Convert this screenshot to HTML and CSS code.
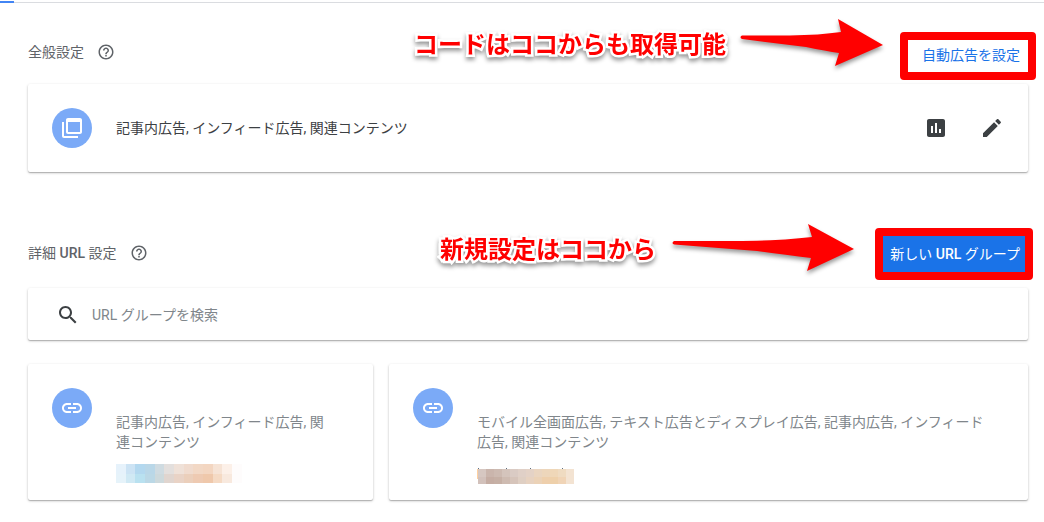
FILE: index.html
```
<!DOCTYPE html>
<html lang="ja">
<head>
    <meta charset="UTF-8">
    <meta name="viewport" content="width=device-width, initial-scale=1.0">
    <title>自動広告</title>
    <link rel="stylesheet" href="styles.css">
</head>
<body>
    <div class="tab-bar"><div class="tab-active"></div></div>

    <main class="content">
        <section class="section">
            <div class="section-head section-head-global">
                <h2 class="section-title">全般設定</h2>
                <button class="icon-button help" aria-label="ヘルプ">
                    <svg width="18" height="18" viewBox="0 0 24 24"><path d="M11 18h2v-2h-2v2zm1-16C6.480 2 2 6.480 2 12s4.480 10 10 10 10-4.480 10-10S17.520 2 12 2zm0 18c-4.410 0-8-3.590-8-8s3.590-8 8-8 8 3.590 8 8-3.590 8-8 8zm0-14c-2.210 0-4 1.790-4 4h2c0-1.100.9-2 2-2s2 .9 2 2c0 2-3 1.750-3 5h2c0-2.250 3-2.500 3-5 0-2.210-1.790-4-4-4z"/></svg>
                </button>
                <a class="setup-link" href="#">自動広告を設定</a>
                <div class="callout callout-code">
                    <span class="callout-text">コードはココからも取得可能</span>
                    <svg class="arrow" width="144" height="48" viewBox="0 0 144 48"><path d="M2 16.500 L50 16.500 Q80 16 101 13 L98 0 L143 26 L95 47 L99 34 Q86 32 66 28 L2 20 Q-1 18 2 16.500z"/></svg>
                </div>
                <div class="frame frame-code"></div>
            </div>

            <div class="card summary">
                <span class="avatar">
                    <svg width="24" height="24" viewBox="0 0 24 24"><path d="M4 6H2v14c0 1.100.9 2 2 2h14v-2H4V6zm16-4H8c-1.100 0-2 .9-2 2v12c0 1.100.9 2 2 2h12c1.100 0 2-.9 2-2V4c0-1.100-.9-2-2-2zm0 14H8V6h12v10z"/></svg>
                </span>
                <p class="summary-text">記事内広告, インフィード広告, 関連コンテンツ</p>
                <div class="actions">
                    <button class="icon-button" aria-label="レポート">
                        <svg width="24" height="24" viewBox="0 0 24 24"><path d="M19 3H5c-1.100 0-2 .9-2 2v14c0 1.100.9 2 2 2h14c1.100 0 2-.9 2-2V5c0-1.100-.9-2-2-2zM9 17H7v-7h2v7zm4 0h-2V7h2v10zm4 0h-2v-4h2v4z"/></svg>
                    </button>
                    <button class="icon-button" aria-label="編集">
                        <svg width="24" height="24" viewBox="0 0 24 24"><path d="M3 17.250V21h3.750L17.810 9.940l-3.750-3.750L3 17.250zM20.710 7.040c.39-.39.39-1.020 0-1.410l-2.340-2.340c-.39-.39-1.020-.39-1.410 0l-1.830 1.830 3.750 3.750 1.830-1.830z"/></svg>
                    </button>
                </div>
            </div>
        </section>

        <section class="section">
            <div class="section-head">
                <h2 class="section-title">詳細 <span class="latin">URL</span> 設定</h2>
                <button class="icon-button help" aria-label="ヘルプ">
                    <svg width="18" height="18" viewBox="0 0 24 24"><path d="M11 18h2v-2h-2v2zm1-16C6.480 2 2 6.480 2 12s4.480 10 10 10 10-4.480 10-10S17.520 2 12 2zm0 18c-4.410 0-8-3.590-8-8s3.590-8 8-8 8 3.590 8 8-3.590 8-8 8zm0-14c-2.210 0-4 1.790-4 4h2c0-1.100.9-2 2-2s2 .9 2 2c0 2-3 1.750-3 5h2c0-2.250 3-2.500 3-5 0-2.210-1.790-4-4-4z"/></svg>
                </button>
                <button class="new-group">新しい <span class="latin">URL</span> グループ</button>
                <div class="callout callout-new">
                    <span class="callout-text">新規設定はココから</span>
                    <svg class="arrow" width="183" height="48" viewBox="0 0 183 48"><path d="M2 17 L70 17 Q110 16.500 140 13 L136 0 L182 25 L135 47 L139 34 Q115 31 85 27 L2 20.500 Q-1 19 2 17z"/></svg>
                </div>
                <div class="frame frame-new"></div>
            </div>

            <label class="card search">
                <svg width="24" height="24" viewBox="0 0 24 24"><path d="M15.500 14h-.79l-.28-.27C15.410 12.590 16 11.110 16 9.500 16 5.910 13.090 3 9.500 3S3 5.910 3 9.500 5.910 16 9.500 16c1.610 0 3.090-.59 4.230-1.570l.27.28v.79l5 4.990L20.490 19l-4.990-5zm-6 0C7.010 14 5 11.990 5 9.500S7.010 5 9.500 5 14 7.010 14 9.500 11.990 14 9.500 14z"/></svg>
                <input class="search-input" type="text" placeholder="URL グループを検索" aria-label="URL グループを検索">
            </label>

            <div class="groups">
                <div class="card group">
                    <span class="avatar">
                        <svg width="24" height="24" viewBox="0 0 24 24"><path d="M3.900 12c0-1.710 1.390-3.100 3.100-3.100h4V7H7c-2.760 0-5 2.240-5 5s2.240 5 5 5h4v-1.900H7c-1.710 0-3.100-1.390-3.100-3.100zM8 13h8v-2H8v2zm9-6h-4v1.900h4c1.710 0 3.100 1.390 3.100 3.100s-1.390 3.100-3.100 3.100h-4V17h4c2.760 0 5-2.240 5-5s-2.240-5-5-5z"/></svg>
                    </span>
                    <div class="group-body">
                        <p class="group-text">記事内広告, インフィード広告, 関連コンテンツ</p>
                        <svg class="mosaic" width="126" height="20" viewBox="0 0 126 20" shape-rendering="crispEdges">
                            <path fill="#e6f2fb" d="M0 0h10v10H0z"/><path fill="#e6f3fa" d="M0 10h10v9H0z"/>
                            <path fill="#cce3f4" d="M10 0h9v10h-9z"/><path fill="#d0e9f4" d="M10 10h9v9h-9z"/>
                            <path fill="#b3d8ef" d="M19 0h10v10H19z"/><path fill="#b9e1f0" d="M19 10h10v9H19z"/>
                            <path fill="#b9d7e8" d="M29 0h10v10H29z"/><path fill="#bbd8e6" d="M29 10h10v9H29z"/>
                            <path fill="#cfdbe1" d="M39 0h9v10h-9z"/><path fill="#cdd9dc" d="M39 10h9v9h-9z"/>
                            <path fill="#e3dfdd" d="M48 0h10v10H48z"/><path fill="#e0d5cf" d="M48 10h10v9H48z"/>
                            <path fill="#efe1d8" d="M58 0h10v10H58z"/><path fill="#e9d3c6" d="M58 10h10v9H58z"/>
                            <path fill="#f0dbce" d="M68 0h9v10h-9z"/><path fill="#ebcfbb" d="M68 10h9v9h-9z"/>
                            <path fill="#f2d8c5" d="M77 0h10v10H77z"/><path fill="#eecab2" d="M77 10h10v9H77z"/>
                            <path fill="#f3d6c1" d="M87 0h10v10H87z"/><path fill="#efc8ab" d="M87 10h10v9H87z"/>
                            <path fill="#f6e3d5" d="M97 0h9v10h-9z"/><path fill="#f5dac4" d="M97 10h9v9h-9z"/>
                            <path fill="#fcf0e8" d="M106 0h10v10h-10z"/><path fill="#f8e9de" d="M106 10h10v9h-10z"/>
                            <path fill="#fefcfc" d="M116 0h10v19h-10z"/>
                        </svg>
                    </div>
                </div>

                <div class="card group">
                    <span class="avatar">
                        <svg width="24" height="24" viewBox="0 0 24 24"><path d="M3.900 12c0-1.710 1.390-3.100 3.100-3.100h4V7H7c-2.760 0-5 2.240-5 5s2.240 5 5 5h4v-1.900H7c-1.710 0-3.100-1.390-3.100-3.100zM8 13h8v-2H8v2zm9-6h-4v1.900h4c1.710 0 3.100 1.390 3.100 3.100s-1.390 3.100-3.100 3.100h-4V17h4c2.760 0 5-2.240 5-5s-2.240-5-5-5z"/></svg>
                    </span>
                    <div class="group-body">
                        <p class="group-text">モバイル全画面広告, テキスト広告とディスプレイ広告, 記事内広告, インフィード広告, 関連コンテンツ</p>
                        <svg class="mosaic" width="98" height="20" viewBox="0 0 98 20" shape-rendering="crispEdges">
                            <path fill="#ffd0a0" d="M0 5h1v10H0z"/>
                            <path fill="#607080" d="M1 4h1v1H1zM29 4h1v1h-1zM53 4h1v1h-1zM85 4h1v1h-1z"/>
                            <path fill="#d6c7c1" d="M1 5h8v8H1z"/><path fill="#d2c1bb" d="M1 13h8v7H1z"/>
                            <path fill="#cab5ac" d="M9 5h8v8H9z"/><path fill="#c5ada3" d="M9 13h8v7H9z"/>
                            <path fill="#cdbab1" d="M17 5h8v8h-8z"/><path fill="#c6b0a5" d="M17 13h8v7h-8z"/>
                            <path fill="#d4c4bc" d="M25 5h8v8h-8z"/><path fill="#cebbb1" d="M25 13h8v7h-8z"/>
                            <path fill="#dacbc4" d="M33 5h8v8h-8z"/><path fill="#d6c4ba" d="M33 13h8v7h-8z"/>
                            <path fill="#e0d0c7" d="M41 5h8v8h-8z"/><path fill="#dfcfc3" d="M41 13h8v7h-8z"/>
                            <path fill="#e4d2c6" d="M49 5h8v8h-8z"/><path fill="#e7d2c0" d="M49 13h8v7h-8z"/>
                            <path fill="#ead5c0" d="M57 5h8v8h-8z"/><path fill="#ebd2b7" d="M57 13h8v7h-8z"/>
                            <path fill="#edd6bb" d="M65 5h8v8h-8z"/><path fill="#eecfac" d="M65 13h8v7h-8z"/>
                            <path fill="#efd7b8" d="M73 5h8v8h-8z"/><path fill="#eed0aa" d="M73 13h8v7h-8z"/>
                            <path fill="#efdbc1" d="M81 5h8v8h-8z"/><path fill="#f0d4b6" d="M81 13h8v7h-8z"/>
                            <path fill="#f3e3d2" d="M89 5h8v15h-8z"/>
                        </svg>
                    </div>
                </div>
            </div>
        </section>
    </main>
</body>
</html>
```
FILE: styles.css
```
body {
    margin: 0;
    background: #fff;
    font-family: Roboto, 'Noto Sans CJK JP', sans-serif;
    font-size: 14px;
    line-height: 20px;
    color: #3c4043;
}

h2, p {
    margin: 0;
}

svg {
    display: block;
    flex: none;
    fill: currentColor;
}

button {
    font: inherit;
    color: inherit;
    border: none;
    cursor: pointer;
}

.tab-bar {
    height: 2px;
    padding-top: 1px;
    background: linear-gradient(#dadce0, #dadce0) bottom / 100% 1px no-repeat;
}

.tab-active {
    width: 14px;
    height: 2px;
    background: #4285f4;
}

.content {
    padding: 32px 16px 20px 28px;
}

.section + .section {
    margin-top: 64px;
}

.section-head {
    position: relative;
    display: flex;
    align-items: flex-start;
    height: 40px;
    margin-bottom: 12px;
}

.section-head-global {
    margin-bottom: 9px;
}

.section-title {
    font-size: 14px;
    font-weight: 400;
    line-height: 34px;
    color: #5f6368;
}

.latin {
    font-weight: 500;
}

.icon-button {
    padding: 0;
    background: none;
}

.help {
    margin: 8px 0 0 13px;
    color: #5f6368;
}

.setup-link {
    margin-left: auto;
    padding: 0 8px;
    line-height: 40px;
    color: #1a73e8;
    text-decoration: none;
}

.new-group {
    height: 36px;
    margin-left: auto;
    padding: 0 8px;
    background: #1a73e8;
    color: #fff;
    white-space: nowrap;
}

/* Cards */
.card {
    background: #fff;
    border-radius: 2px;
    box-shadow: 0 1px 3px rgba(0, 0, 0, 0.2), 0 1px 1px rgba(0, 0, 0, 0.2);
}

.avatar {
    display: flex;
    flex: none;
    align-items: center;
    justify-content: center;
    width: 40px;
    height: 40px;
    border-radius: 50%;
    background: #7baaf7;
    color: #fff;
}

.summary {
    display: flex;
    align-items: center;
    gap: 24px;
    padding: 24px;
}

.actions {
    display: flex;
    gap: 32px;
    margin-left: auto;
}

.search {
    display: flex;
    align-items: center;
    gap: 12px;
    box-sizing: border-box;
    height: 52px;
    padding: 2px 28px 0;
}

.search-input {
    flex: 1;
    min-width: 0;
    padding: 0;
    border: none;
    outline: none;
    background: none;
    font: inherit;
    color: inherit;
}

.search-input::placeholder {
    color: #80868b;
}

.groups {
    display: grid;
    grid-template-columns: 345fr 639fr;
    gap: 16px;
    margin-top: 24px;
}

.group {
    display: flex;
    gap: 24px;
    padding: 24px 40px 16px 24px;
}

.group-body {
    margin-top: 24px;
}

.group-text {
    color: #80868b;
}

.mosaic {
    margin-top: 12px;
}

/* Red notes on top of the page */
.callout {
    position: absolute;
    top: -16px;
    display: flex;
    align-items: center;
    color: #f00;
    pointer-events: none;
}

.callout-code {
    right: 144px;
    gap: 14px;
}

.callout-new {
    top: -12px;
    right: 173px;
    gap: 16px;
}

.callout-text {
    font-family: 'Noto Sans CJK JP', sans-serif;
    font-size: 24px;
    font-weight: 700;
    line-height: 32px;
    white-space: nowrap;
    -webkit-text-stroke: 5px #fff;
    paint-order: stroke fill;
    filter: drop-shadow(0 3px 2px rgba(0, 0, 0, 0.4));
}

.arrow {
    overflow: visible;
    filter: drop-shadow(0 3px 2px rgba(0, 0, 0, 0.4));
}

.frame {
    position: absolute;
    box-sizing: border-box;
    border: 8px solid #f00;
    border-radius: 4px;
    pointer-events: none;
}

.frame-code {
    top: -3px;
    right: -8px;
    width: 136px;
    height: 48px;
}

.frame-new {
    top: -8px;
    right: -5px;
    width: 158px;
    height: 52px;
}
```
